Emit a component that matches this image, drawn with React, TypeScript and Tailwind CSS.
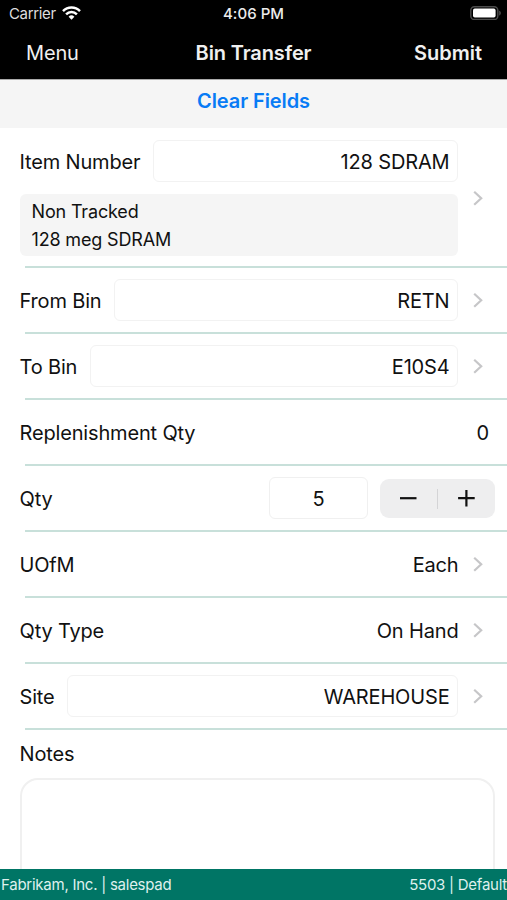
import type { ReactNode } from 'react'

function Chevron() {
  return (
    <svg className="h-4 w-2.5 shrink-0" viewBox="0 0 10 16" fill="none" stroke="#c6c6c8" strokeWidth="2.2">
      <path d="M1.2 1.7 8.2 8.2l-7 6.5" />
    </svg>
  )
}

function Divider() {
  return <div className="ml-[25px] h-0.5 shrink-0 bg-[#c8e0da]" />
}

function Row({ label, children }: { label: string; children: ReactNode }) {
  return (
    <>
      <div className="flex h-16 shrink-0 items-center pl-[19.5px]">
        <span className="shrink-0 whitespace-nowrap pt-0.5">{label}</span>
        {children}
      </div>
      <Divider />
    </>
  )
}

function Field({ value }: { value: string }) {
  return (
    <div className="ml-[12.5px] flex h-[42px] flex-1 items-center justify-end rounded-md border border-[#f2f2f2] pr-[7px] pt-0.5">{value}</div>
  )
}

export default function App() {
  return (
    <div className="flex h-[900px] w-[507px] flex-col overflow-hidden bg-white font-['Inter','Liberation_Sans',sans-serif] text-[20px] tracking-[-0.16px] text-[#111]">

      {/* Status bar */}
      <div className="grid h-7 shrink-0 grid-cols-3 items-center bg-black text-[15px] text-[#dedede]">
        <div className="flex items-center gap-1.5 pl-[9px]">
          <span className="tracking-[-0.35px]">Carrier</span>
          <svg className="-mt-0.5 h-[14px] w-[19px]" viewBox="0 0 19 14" fill="none" stroke="#fff" strokeWidth="2.5">
            <path d="M1 5.1a12 12 0 0 1 17 0" />
            <path d="M4.1 8.3a7.6 7.6 0 0 1 10.8 0" />
            <path d="M9.5 13.8 6.6 10.8a4.1 4.1 0 0 1 5.8 0Z" fill="#fff" stroke="none" />
          </svg>
        </div>
        <span className="text-center font-medium tracking-[0.05px] text-[#ececec]">4:06 PM</span>
        <svg className="mr-1 -mt-0.5 h-[14px] w-[33px] justify-self-end" viewBox="0 0 33 14">
          <rect x=".8" y=".7" width="27" height="12.8" rx="3.6" fill="none" stroke="#4c4c4c" strokeWidth="1.4" />
          <rect x="3" y="2.6" width="22.6" height="9" rx="1.8" fill="#fff" />
          <path d="M29.2 4.7c2.2.6 2.2 4 0 4.8Z" fill="#4c4c4c" />
        </svg>
      </div>

      {/* Navigation */}
      <div className="grid h-[51px] shrink-0 grid-cols-3 items-center bg-black px-[25px] pb-0.5 text-[#f0f0f0]">
        <span className="pl-px">Menu</span>
        <span className="text-center font-semibold tracking-[-0.12px]">Bin Transfer</span>
        <span className="text-right font-semibold tracking-[0px]">Submit</span>
      </div>
      <button className="h-[49px] shrink-0 border-t border-[#aaa] bg-[#f5f5f5] pb-[6px] font-semibold tracking-[-0.08px] text-[#087bf5]">Clear Fields</button>

      {/* Item */}
      <div className="flex h-[138px] shrink-0 items-center gap-[15px] pl-[19.5px] pt-0.5">
        <div className="flex w-[438px] flex-col gap-3">
          <div className="flex items-center">
            <span className="pt-0.5">Item Number</span>
            <Field value="128 SDRAM" />
          </div>
          <div className="h-[62px] rounded-md bg-[#f5f5f5] px-3 pt-1 text-[18px] leading-7">
            <p>Non Tracked</p>
            <p>128 meg SDRAM</p>
          </div>
        </div>
        <Chevron />
      </div>
      <Divider />

      <Row label="From Bin"><Field value="RETN" /><span className="ml-[15px] mr-[24.5px]"><Chevron /></span></Row>
      <Row label="To Bin"><Field value="E10S4" /><span className="ml-[15px] mr-[24.5px]"><Chevron /></span></Row>
      <Row label="Replenishment Qty"><span className="ml-auto mr-[18px] pt-0.5">0</span></Row>
      <Row label="Qty">
        <div className="ml-auto mr-3 flex h-[42px] w-[99px] items-center justify-center rounded-md border border-[#f0f0f0] pt-0.5">5</div>
        <div className="mr-3 flex h-[39px] w-[115px] items-center rounded-[9px] bg-[#eeeeef]">
          <button className="flex flex-1 justify-center" aria-label="Decrease">
            <svg className="size-5" viewBox="0 0 20 20" stroke="#111" strokeWidth="2.2"><path d="M1 10.2h16.5" /></svg>
          </button>
          <div className="mt-0.5 h-5 w-px bg-[#d4d4d6]" />
          <button className="flex flex-1 justify-center" aria-label="Increase">
            <svg className="size-5" viewBox="0 0 20 20" stroke="#111" strokeWidth="2.2"><path d="M1.1 10.2h16.6M9.4 1.9v16.6" /></svg>
          </button>
        </div>
      </Row>
      <Row label="UOfM"><span className="ml-auto mr-3.5 pt-0.5">Each</span><span className="mr-[24.5px]"><Chevron /></span></Row>
      <Row label="Qty Type"><span className="ml-auto mr-3.5 pt-0.5">On Hand</span><span className="mr-[24.5px]"><Chevron /></span></Row>
      <Row label="Site"><Field value="WAREHOUSE" /><span className="ml-[15px] mr-[24.5px]"><Chevron /></span></Row>

      {/* Notes */}
      <div className="flex min-h-0 flex-1 flex-col overflow-hidden pl-[19.5px] pr-3 pt-2">
        <span className="leading-8">Notes</span>
        <div className="mt-2 h-40 shrink-0 rounded-[18px] border-2 border-[#f0f0f0]" />
      </div>

      {/* Footer */}
      <div className="flex h-[31px] shrink-0 items-center justify-between bg-[#007565] pl-px pt-0.5 text-[15px] tracking-[-0.25px] text-[#dff0ed]">
        <span>Fabrikam, Inc. | salespad</span>
        <span>5503 | Default</span>
      </div>
    </div>
  )
}
